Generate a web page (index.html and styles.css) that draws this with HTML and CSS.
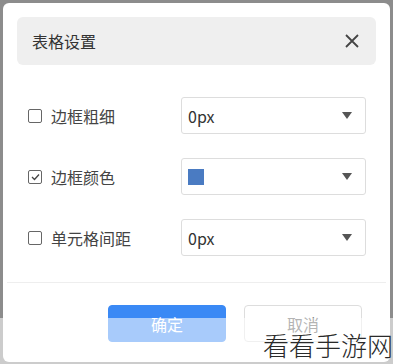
FILE: index.html
```html
<!DOCTYPE html>
<html lang="zh-CN">
<head>
    <meta charset="UTF-8">
    <meta name="viewport" content="width=device-width, initial-scale=1.0">
    <title>表格设置</title>
    <link rel="stylesheet" href="styles.css">
</head>
<body>

    <div class="dialog">
        <div class="dialog-header">
            <span class="dialog-title">表格设置</span>
            <svg class="close-icon" width="14" height="14" viewBox="0 0 14 14">
                <path d="M1 1 L13 13 M13 1 L1 13" stroke="#444" stroke-width="1.8" fill="none"/>
            </svg>
        </div>

        <div class="form">
            <div class="form-row">
                <label class="field-label">
                    <span class="checkbox"></span>
                    边框粗细
                </label>
                <div class="select">
                    <span class="select-value">0px</span>
                    <span class="select-arrow"></span>
                </div>
            </div>

            <div class="form-row">
                <label class="field-label">
                    <span class="checkbox checked">
                        <svg width="9" height="8" viewBox="0 0 9 8">
                            <path d="M1 4 L3.5 6.5 L8 1.5" stroke="#444" stroke-width="1.3" fill="none"/>
                        </svg>
                    </span>
                    边框颜色
                </label>
                <div class="select">
                    <span class="color-swatch"></span>
                    <span class="select-arrow"></span>
                </div>
            </div>

            <div class="form-row">
                <label class="field-label">
                    <span class="checkbox"></span>
                    单元格间距
                </label>
                <div class="select">
                    <span class="select-value">0px</span>
                    <span class="select-arrow"></span>
                </div>
            </div>
        </div>

        <div class="divider"></div>

        <div class="dialog-footer">
            <button class="btn primary">确定</button>
            <button class="btn">取消</button>
        </div>
    </div>

    <div class="watermark-band">
        <span class="watermark">看看手游网</span>
    </div>

</body>
</html>
```

FILE: styles.css
```css
:root {
    --page-bg: #8c8c8c;
    --header-bg: #efefef;
    --text-color: #333;
    --border-color: #ddd;
    --primary-color: #3a89f5;
}
body {
    margin: 0;
    background-color: var(--page-bg);
    font-family: "Noto Sans CJK SC", "Noto Sans", sans-serif;
    color: var(--text-color);
    height: 364px;
    overflow: hidden;
    position: relative;
}
.dialog {
    margin: 3px 3px 0 3px;
    height: 359px;
    box-sizing: border-box;
    padding: 14px;
    background-color: #fff;
    border-radius: 6px;
}
.dialog-header {
    height: 48px;
    display: flex;
    align-items: center;
    justify-content: space-between;
    padding: 0 17px 0 15px;
    background-color: var(--header-bg);
    border-radius: 6px;
}
.dialog-title {
    font-size: 16px;
    color: #333;
}
.close-icon {
    display: block;
}
.form {
    margin-top: 32px;
    display: flex;
    flex-direction: column;
    gap: 24px;
}
.form-row {
    display: flex;
    align-items: center;
    height: 37px;
}
.field-label {
    width: 164px;
    padding-left: 11px;
    box-sizing: border-box;
    display: flex;
    align-items: center;
    gap: 9px;
    font-size: 16px;
    color: #444;
}
.checkbox {
    width: 12px;
    height: 12px;
    border: 1px solid #666;
    border-radius: 2px;
    display: flex;
    align-items: center;
    justify-content: center;
    flex-shrink: 0;
}
.select {
    width: 185px;
    height: 37px;
    box-sizing: border-box;
    border: 1px solid var(--border-color);
    border-radius: 3px;
    display: flex;
    align-items: center;
    justify-content: space-between;
    padding: 0 13px 0 6px;
}
.select-value {
    font-size: 16px;
    color: #333;
}
.select-arrow {
    width: 0;
    height: 0;
    border-left: 5px solid transparent;
    border-right: 5px solid transparent;
    border-top: 7px solid #555;
}
.color-swatch {
    width: 16px;
    height: 16px;
    background-color: #4a7bc2;
}
.divider {
    margin: 26px -10px 0 -10px;
    height: 1px;
    background-color: #eee;
}
.dialog-footer {
    margin-top: 22px;
    display: flex;
    justify-content: flex-end;
    gap: 18px;
    padding-right: 14px;
}
.btn {
    width: 118px;
    height: 37px;
    font-family: inherit;
    font-size: 16px;
    color: #555;
    background-color: #fff;
    border: 1px solid var(--border-color);
    border-radius: 4px;
    padding: 0;
}
.btn.primary {
    color: #fff;
    background-color: var(--primary-color);
    border-color: var(--primary-color);
}
.watermark-band {
    position: absolute;
    left: 0;
    right: 0;
    top: 318px;
    height: 46px;
    background-color: rgba(255, 255, 255, 0.56);
    display: flex;
    justify-content: flex-end;
    align-items: flex-end;
}
.watermark {
    font-size: 26px;
    font-weight: 300;
    color: #2a2a2a;
    line-height: 1;
    margin-bottom: 6px;
    margin-right: 0;
}
```
